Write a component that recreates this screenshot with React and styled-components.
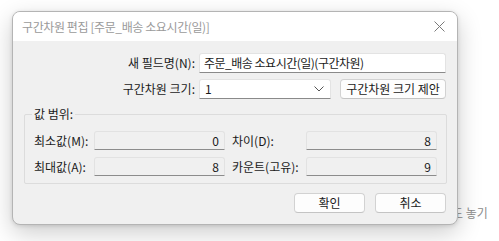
import React from "react";
import styled, { createGlobalStyle } from "styled-components";

const Global = createGlobalStyle`
  html, body { margin: 0; padding: 0; background: #ffffff; }
  body { font-family: "Noto Sans CJK KR", "Noto Sans", sans-serif; font-size: 12px; color: #1a1a1a; }
  * { box-sizing: border-box; }
`;

const Desktop = styled.div`
  position: relative;
  width: 499px;
  height: 241px;
  overflow: hidden;
  padding: 11px 0 0 12px;
  background: #ffffff;
`;

const BehindText = styled.div`
  position: absolute;
  left: 452px;
  top: 204px;
  font-size: 12px;
  line-height: 18px;
  color: #8c8c8c;
  z-index: 0;
`;

const Dialog = styled.div`
  position: relative;
  z-index: 1;
  width: 446px;
  height: 214px;
  border: 1px solid #b4b4b4;
  border-radius: 8px;
  overflow: hidden;
  background: #f0f0f0;
  box-shadow: 0 8px 24px rgba(0, 0, 0, 0.2), 0 1px 4px rgba(0, 0, 0, 0.12);
  display: flex;
  flex-direction: column;
`;

const TitleBar = styled.div`
  height: 29px;
  flex: none;
  background: #ffffff;
  display: flex;
  align-items: center;
  justify-content: space-between;
  padding: 0 9px 0 9px;
`;

const Title = styled.span`
  color: #9a9a9a;
  font-size: 12px;
  letter-spacing: -0.4px;
  line-height: 16px;
  white-space: nowrap;
`;

const CloseBtn = styled.div`
  width: 18px;
  height: 18px;
  display: flex;
  align-items: center;
  justify-content: center;
`;

const Body = styled.div`
  flex: 1;
  display: flex;
  flex-direction: column;
  padding: 12px 11px 0 0;
`;

const FormGrid = styled.div`
  display: grid;
  grid-template-columns: 182px 1fr;
  column-gap: 4px;
  row-gap: 6px;
  align-items: center;
`;

const Label = styled.label`
  justify-self: ${(p) => (p.$align === "start" ? "start" : "end")};
  white-space: nowrap;
  line-height: 16px;
  padding-left: ${(p) => p.$pad || 0}px;
`;

const TextInput = styled.div`
  height: 20px;
  background: #ffffff;
  border: 1px solid #e3e3e3;
  border-bottom: 1px solid #8a8a8a;
  border-radius: 3px 3px 0 0;
  padding: 0 4px;
  display: flex;
  align-items: center;
  line-height: 16px;
  white-space: nowrap;
  overflow: hidden;
  letter-spacing: ${(p) => p.$tight ? "-0.5px" : "0"};
`;

const SizeRow = styled.div`
  display: flex;
  gap: 9px;
  align-items: center;
`;

const Select = styled(TextInput)`
  width: 132px;
  justify-content: space-between;
  padding: 0 6px 0 5px;
`;

const Button = styled.div`
  width: ${(p) => p.$w}px;
  height: 20px;
  background: #fdfdfd;
  border: 1px solid #d2d2d2;
  border-bottom-color: #c4c4c4;
  border-radius: 4px;
  display: flex;
  align-items: center;
  justify-content: center;
  white-space: nowrap;
  line-height: 16px;
`;

const Group = styled.div`
  position: relative;
  margin: 15px 0 0 11px;
  margin-right: -1px;
  height: 70px;
  border: 1px solid #dcdcdc;
  border-radius: 2px;
  padding: 16px 0 7px 9px;
`;

const Legend = styled.span`
  position: absolute;
  left: 7px;
  top: -9px;
  padding: 0 2px;
  background: #f0f0f0;
  line-height: 16px;
`;

const RangeGrid = styled.div`
  display: grid;
  grid-template-columns: 60px 131px 81px 131px;
  row-gap: 7px;
  align-items: center;
`;

const ReadField = styled.div`
  height: 19px;
  background: #f0f0f0;
  border: 1px solid #e2e2e2;
  border-bottom: 1px solid #8c8c8c;
  border-radius: 3px 3px 0 0;
  padding: 0 5px;
  display: flex;
  align-items: center;
  justify-content: flex-end;
  line-height: 16px;
`;

const Footer = styled.div`
  margin-top: 9px;
  display: flex;
  justify-content: flex-end;
  gap: 10px;
`;

const XIcon = () => (
  <svg width="11" height="11" viewBox="0 0 11 11">
    <path d="M0.5 0.5L10.5 10.5M10.5 0.5L0.5 10.5" stroke="#7a7a7a" strokeWidth="1" fill="none" />
  </svg>
);

const Chevron = () => (
  <svg width="10" height="6" viewBox="0 0 10 6">
    <path d="M0.5 0.5L5 5L9.5 0.5" stroke="#555" strokeWidth="1" fill="none" />
  </svg>
);

export default function App() {
  return (
    <>
      <Global />
      <Desktop>
        <BehindText>도 놓기</BehindText>
        <Dialog>
          <TitleBar>
            <Title>구간차원 편집 [주문_배송 소요시간(일)]</Title>
            <CloseBtn>
              <XIcon />
            </CloseBtn>
          </TitleBar>
          <Body>
            <FormGrid>
              <Label>새 필드명(N):</Label>
              <TextInput $tight>주문_배송 소요시간(일)(구간차원)</TextInput>
              <Label>구간차원 크기:</Label>
              <SizeRow>
                <Select>
                  <span>1</span>
                  <Chevron />
                </Select>
                <Button $w={106}>구간차원 크기 제안</Button>
              </SizeRow>
            </FormGrid>
            <Group>
              <Legend>값 범위:</Legend>
              <RangeGrid>
                <Label $align="start">최소값(M):</Label>
                <ReadField>0</ReadField>
                <Label $align="start" $pad={7}>차이(D):</Label>
                <ReadField>8</ReadField>
                <Label $align="start">최대값(A):</Label>
                <ReadField>8</ReadField>
                <Label $align="start" $pad={7}>카운트(고유):</Label>
                <ReadField>9</ReadField>
              </RangeGrid>
            </Group>
            <Footer>
              <Button $w={71}>확인</Button>
              <Button $w={71}>취소</Button>
            </Footer>
          </Body>
        </Dialog>
      </Desktop>
    </>
  );
}
